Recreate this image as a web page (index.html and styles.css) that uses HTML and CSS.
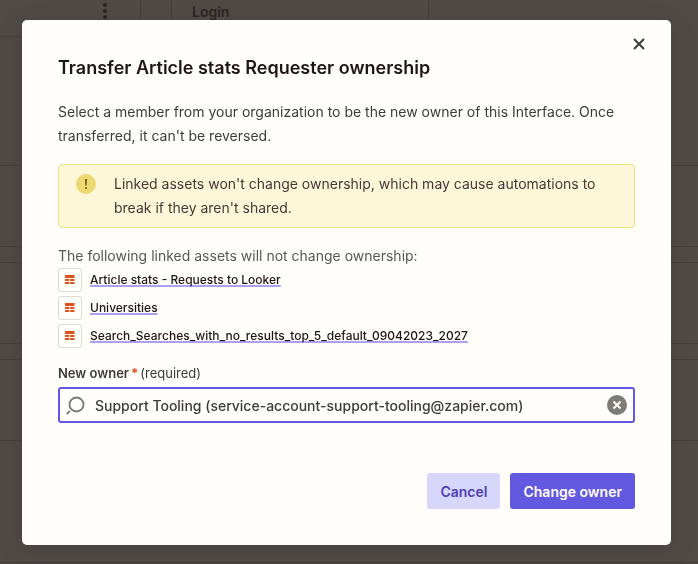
FILE: index.html
```html
<!DOCTYPE html>
<html lang="en">
<head>
  <meta charset="UTF-8" />
  <meta name="viewport" content="width=device-width, initial-scale=1.0"/>
  <title>Transfer ownership</title>
  <link rel="stylesheet" href="styles.css">
</head>
<body>
  <!-- page behind the dialog -->
  <div class="page" aria-hidden="true">
    <div class="page-header">
      <div class="cell cell-menu">
        <svg width="6" height="18" viewBox="0 0 6 18" fill="currentColor"><circle cx="3" cy="3" r="2"/><circle cx="3" cy="9" r="2"/><circle cx="3" cy="15" r="2"/></svg>
      </div>
      <div class="cell cell-gap"></div>
      <div class="cell cell-title">Login</div>
    </div>
    <div class="page-row first"></div>
    <div class="page-row"></div>
    <div class="page-row gap"></div>
    <div class="page-row"></div>
    <div class="page-row gap"></div>
    <div class="page-row"></div>
    <div class="page-row last"></div>
  </div>

  <div class="overlay">
    <div class="modal" role="dialog" aria-modal="true" aria-labelledby="modal-title">
      <button type="button" class="close" aria-label="Close">
        <svg width="12" height="12" viewBox="0 0 12 12" fill="none" stroke="currentColor" stroke-width="2"><path d="M1 1l10 10M11 1L1 11"/></svg>
      </button>

      <h1 id="modal-title">Transfer Article stats Requester ownership</h1>
      <p class="intro">Select a member from your organization to be the new owner of this Interface. Once transferred, it can't be reversed.</p>

      <div class="alert">
        <svg class="alert-icon" width="20" height="20" viewBox="0 0 20 20"><circle cx="10" cy="10" r="10" fill="#ecd972"/><path d="M9 5h2l-.3 6.500H9.300z" fill="#6b5f14"/><circle cx="10" cy="14" r="1.100" fill="#6b5f14"/></svg>
        <p>Linked assets won't change ownership, which may cause automations to break if they aren't shared.</p>
      </div>

      <p class="assets-title">The following linked assets will not change ownership:</p>
      <ul class="assets">
        <li>
          <span class="asset-icon"><svg width="10" height="10" viewBox="0 0 10 10" fill="#e2511a"><path d="M0 0h9.500v3H0zM0 4h4.300v2H0zM5.200 4h4.300v2H5.200zM0 7h4.300v2H0zM5.200 7h4.300v2H5.200z"/></svg></span>
          <a href="#">Article stats - Requests to Looker</a>
        </li>
        <li>
          <span class="asset-icon"><svg width="10" height="10" viewBox="0 0 10 10" fill="#e2511a"><path d="M0 0h9.500v3H0zM0 4h4.300v2H0zM5.200 4h4.300v2H5.200zM0 7h4.300v2H0zM5.200 7h4.300v2H5.200z"/></svg></span>
          <a href="#">Universities</a>
        </li>
        <li>
          <span class="asset-icon"><svg width="10" height="10" viewBox="0 0 10 10" fill="#e2511a"><path d="M0 0h9.500v3H0zM0 4h4.300v2H0zM5.200 4h4.300v2H5.200zM0 7h4.300v2H0zM5.200 7h4.300v2H5.200z"/></svg></span>
          <a href="#">Search_Searches_with_no_results_top_5_default_09042023_2027</a>
        </li>
      </ul>

      <form id="form-transfer">
        <label for="owner"><strong>New owner</strong><span class="star">*</span>(required)</label>
        <div class="field">
          <svg width="20" height="20" viewBox="0 0 20 20" fill="none" stroke="#7d7873" stroke-width="1.800"><circle cx="10.500" cy="9.500" r="7"/><path d="M3.800 16l-3 3"/></svg>
          <input type="text" id="owner" name="owner" value="Support Tooling (service-account-support-tooling@zapier.com)" required />
          <button type="button" class="clear" aria-label="Clear">
            <svg width="20" height="20" viewBox="0 0 20 20"><circle cx="10" cy="10" r="10" fill="#7f7c77"/><path d="M6.500 6.500l7 7M13.500 6.500l-7 7" stroke="#fffdf9" stroke-width="2"/></svg>
          </button>
        </div>

        <div class="actions">
          <button type="button" class="btn btn-cancel">Cancel</button>
          <button type="submit" class="btn btn-submit">Change owner</button>
        </div>
      </form>
    </div>
  </div>
</body>
</html>
```

FILE: styles.css
```css
* {
  box-sizing: border-box;
}

body {
  margin: 0;
  font-family: Inter, 'Liberation Sans', sans-serif;
  font-size: 14px;
  line-height: 24px;
  color: #403a38;
  background: #504a46;
}

h1, p, ul {
  margin: 0;
  padding: 0;
}

button {
  border: none;
  padding: 0;
  font-family: inherit;
  cursor: pointer;
}

svg {
  display: block;
  flex: none;
}

/* page in the background */
.page {
  height: 100vh;
  overflow: hidden;
  color: #2a2523;
}

.page-header {
  display: flex;
  width: 429px;
  height: 37px;
}

.cell {
  border-right: 1px solid #443e3b;
}

.cell-menu {
  display: flex;
  justify-content: flex-end;
  width: 141px;
  padding: 2px 32px 0 0;
  border-bottom: 1px solid #443e3b;
}

.cell-gap {
  width: 31px;
}

.cell-title {
  flex: 1;
  padding-left: 20px;
  font-weight: 600;
}

.page-row {
  height: 81px;
  border-bottom: 1px solid #443e3b;
}

.page-row.first {
  height: 129px;
}

.page-row.gap {
  height: 16px;
}

.page-row.last {
  height: 122px;
}

/* dialog */
.overlay {
  position: fixed;
  inset: 0;
  display: flex;
  align-items: flex-start;
  padding: 20px 27px 20px 22px;
}

.modal {
  position: relative;
  width: 100%;
  padding: 36px;
  background: #fffefa;
  border-radius: 5px;
  box-shadow: 0 6px 24px rgba(45, 36, 40, 0.2);
}

.close {
  position: absolute;
  top: 14px;
  right: 22px;
  display: grid;
  place-items: center;
  width: 20px;
  height: 20px;
  background: none;
  color: #403a38;
}

h1 {
  font-size: 18px;
  font-weight: 600;
  color: #201515;
}

.intro {
  margin-top: 20px;
}

.alert {
  display: flex;
  gap: 18px;
  margin: 16px 0;
  padding: 7px 17px;
  background: #fdf6d9;
  border: 1px solid #f0dd7c;
  border-radius: 4px;
}

.alert-icon {
  margin-top: 2px;
}

.assets-title {
  color: #5c5653;
}

.assets {
  display: flex;
  flex-direction: column;
  gap: 4px;
  list-style: none;
}

.assets li {
  display: flex;
  align-items: center;
  gap: 8px;
}

.asset-icon {
  display: grid;
  place-items: center;
  width: 24px;
  height: 24px;
  border: 1px solid #dddbd2;
  border-radius: 3px;
}

.assets a {
  font-size: 12px;
  font-weight: 500;
  line-height: 24px;
  color: #201515;
  text-decoration: underline 2px #a9a1f2;
  text-decoration-skip-ink: none;
  text-underline-offset: 1px;
}

label {
  display: block;
  margin: 15px 0 4px;
  font-size: 13px;
  line-height: 20px;
}

label strong {
  font-weight: 600;
}

.star {
  margin: 0 2px;
  font-weight: 700;
  color: #e8501c;
}

.field {
  display: flex;
  align-items: center;
  gap: 9px;
  height: 36px;
  padding: 0 6px;
  border: 2px solid #6358e6;
  border-radius: 3px;
}

.field input {
  flex: 1;
  min-width: 0;
  padding: 0;
  border: none;
  outline: none;
  background: none;
  font-family: inherit;
  font-size: 14px;
  font-weight: 500;
  color: #403a38;
}

.clear {
  background: none;
}

.actions {
  display: flex;
  justify-content: flex-end;
  gap: 10px;
  margin-top: 50px;
}

.btn {
  height: 36px;
  padding: 0 13px;
  border-radius: 3px;
  font-size: 14px;
  font-weight: 600;
}

.btn-cancel {
  background: #d7d7fb;
  color: #4f3fb8;
}

.btn-submit {
  background: #6358e0;
  color: #fffdf9;
}
```
